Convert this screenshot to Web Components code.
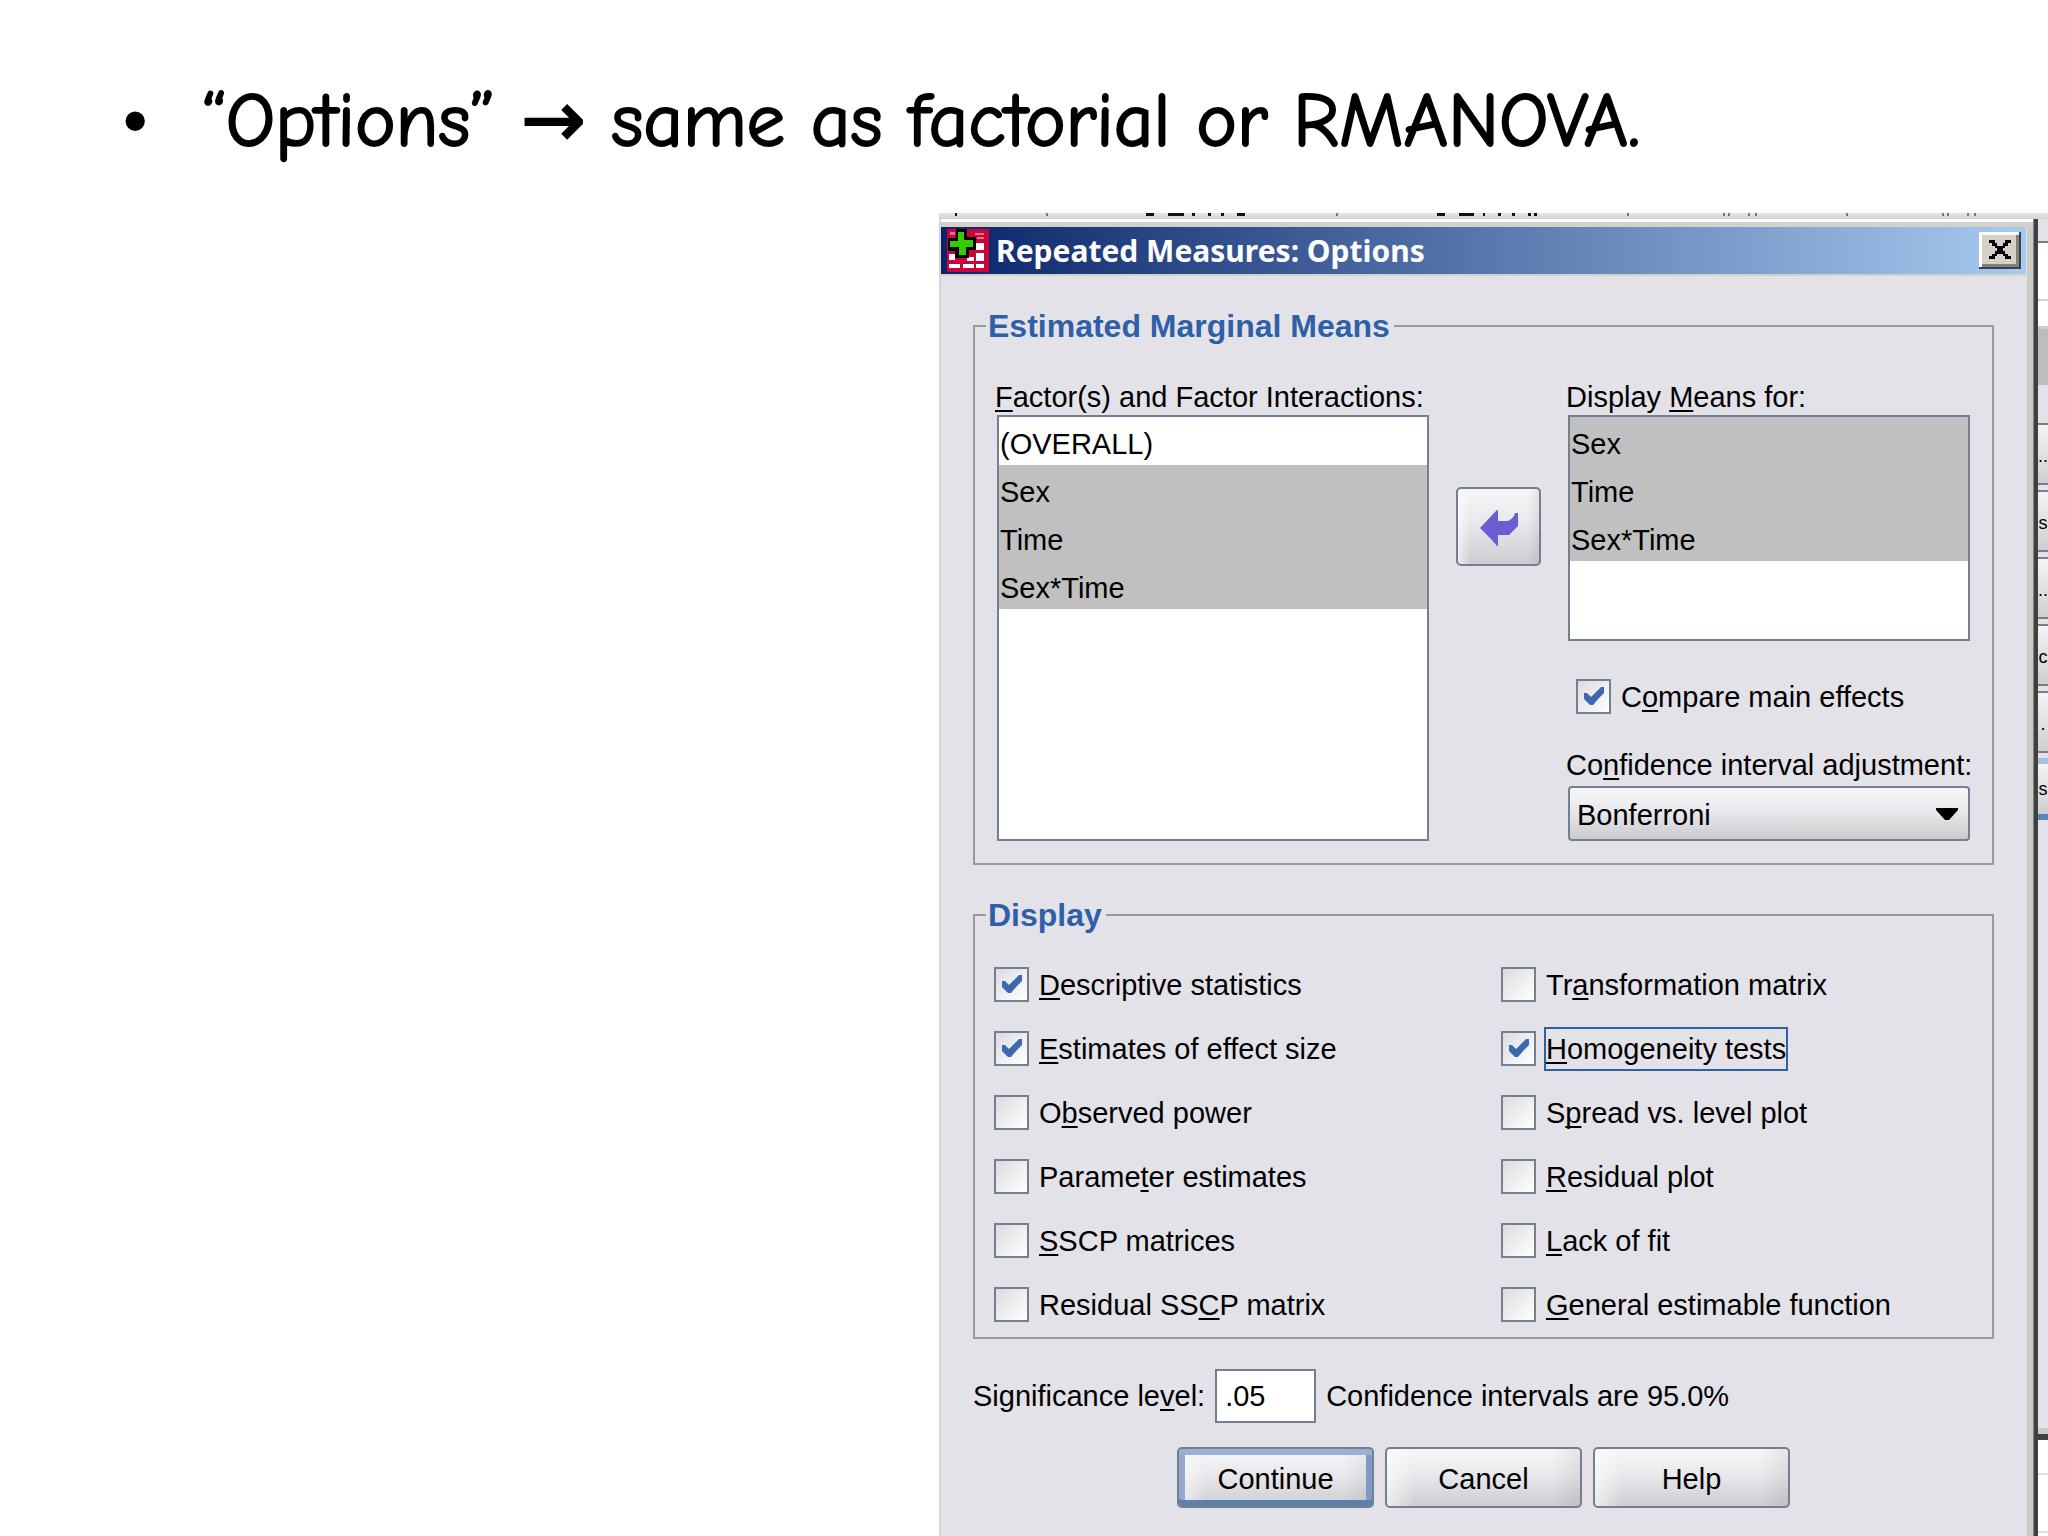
<!DOCTYPE html>
<html lang="en">
<head>
<meta charset="utf-8">
<title>Repeated Measures: Options</title>
<style>
    html, body {
        height: 100%;
        margin: 0;
        overflow: hidden;
        background: #fff;
        color: #000;
    }
    body {
        font-family: "Liberation Sans", Arial, sans-serif;
    }
</style>
</head>
<body>
<slide-page>
    <slide-bullet slot="title">“Options” <span class="arrow">→</span> same as factorial or RMANOVA.</slide-bullet>
    <options-dialog></options-dialog>
</slide-page>

<script>
/**
 * SlidePage - slide with a heading line and a screenshot area on the right
 */
class SlidePage extends HTMLElement {
    constructor() {
        super();
        this.attachShadow({ mode: 'open' }).innerHTML = `
            <style>
                :host {
                    display: grid;
                    grid-template-columns: 939fr 1109fr;
                    grid-template-rows: auto minmax(0, 1fr);
                    height: 100%;
                }
                header {
                    grid-column: 1 / -1;
                    padding: 79px 0 50px 124px;
                }
                main {
                    grid-column: 2;
                    display: flex;
                    flex-direction: column;
                }
                .strip {
                    flex: none;
                    height: 6px;
                    background: linear-gradient(#e6e6e3, #d3d4cf);
                    overflow: hidden;
                }
                .strip svg {
                    display: block;
                }
                .windows {
                    flex: 1;
                    display: flex;
                    min-height: 0;
                }
                .windows slot {
                    display: flex;
                    flex: 1;
                }
            </style>
            <header><slot name="title"></slot></header>
            <main>
                <div class="strip"><svg width="1109" height="3" aria-hidden="true"></svg></div>
                <div class="windows">
                    <slot></slot>
                    <window-behind></window-behind>
                </div>
            </main>
        `;
        this.drawTicks();
    }

    // Bottom edges of the text line that the dialog covers
    drawTicks() {
        const dark = [[16, 2], [207, 8], [229, 16], [253, 3], [269, 3], [282, 3], [298, 8],
            [498, 8], [520, 15], [544, 2], [559, 3], [573, 3], [589, 3], [595, 3]];
        const light = [107, 397, 688, 784, 789, 809, 816, 907, 1003, 1008, 1028, 1035];
        this.shadowRoot.querySelector('svg').innerHTML =
            dark.map(([x, w]) => `<rect x="${x}" width="${w}" height="3" fill="#111"/>`).join('') +
            light.map(x => `<rect x="${x}" width="2" height="3" fill="#777"/>`).join('');
    }
}

/**
 * SlideBullet - one bulleted line
 */
class SlideBullet extends HTMLElement {
    constructor() {
        super();
        this.attachShadow({ mode: 'open' }).innerHTML = `
            <style>
                :host {
                    display: grid;
                    grid-template-columns: 78px 1fr;
                    font-family: "Comic Sans MS", "Comic Neue", "Liberation Sans", cursive;
                    font-size: 77px;
                    line-height: 84px;
                    white-space: nowrap;
                    -webkit-text-stroke: 2px #000;
                }
                .dot {
                    font-family: "Liberation Sans", sans-serif;
                    font-size: 64px;
                }
                ::slotted(.arrow) {
                    font-family: "DejaVu Sans", sans-serif;
                    line-height: 1;
                }
            </style>
            <span class="dot">•</span>
            <span><slot></slot></span>
        `;
    }
}

/**
 * WindowBehind - visible edge of the window under the dialog
 */
class WindowBehind extends HTMLElement {
    constructor() {
        super();
        this.attachShadow({ mode: 'open' }).innerHTML = `
            <style>
                :host {
                    flex: 0 0 10px;
                    display: flex;
                    flex-direction: column;
                    overflow: hidden;
                    background: #fff;
                    font-size: 18px;
                }
                div {
                    flex: none;
                }
                .top {
                    height: 22px;
                    background: #e3e2e8;
                    border-bottom: 2px solid #71818f;
                }
                .field {
                    height: 56px;
                    border-bottom: 2px solid #d0d0d0;
                }
                .gap {
                    height: 25px;
                    border-bottom: 3px solid #d0d0c8;
                }
                .bar {
                    height: 56px;
                    background: #bdbdbd;
                }
                .panel {
                    box-sizing: border-box;
                    height: 1055px;
                    padding-top: 38px;
                    background: #e3e2e8;
                    border-bottom: 6px solid #404040;
                    box-shadow: inset 0 -6px #cbccc5;
                    display: flex;
                    flex-direction: column;
                    gap: 5px;
                }
                .side {
                    box-sizing: border-box;
                    height: 62px;
                    border: solid #71818f;
                    border-width: 2px 0;
                    line-height: 62px;
                    background: linear-gradient(#f4f4f4, #cfcfd1);
                    display: flex;
                    justify-content: center;
                }
                .side:last-child {
                    border-top: 6px solid #a4c0e4;
                    border-bottom: 6px solid #5a84bb;
                    line-height: 50px;
                }
                .rule {
                    height: 33px;
                    border-bottom: 2px solid #e0e0e0;
                }
                .rule + .rule {
                    height: 56px;
                }
            </style>
            <div class="top"></div>
            <div class="field"></div>
            <div class="gap"></div>
            <div class="bar"></div>
            <div class="panel">
                <div class="side">..</div>
                <div class="side">s</div>
                <div class="side">..</div>
                <div class="side">c</div>
                <div class="side">.</div>
                <div class="side">s</div>
            </div>
            <div class="rule"></div>
            <div class="rule"></div>
        `;
    }
}

/**
 * GroupBox - titled frame
 */
class GroupBox extends HTMLElement {
    constructor() {
        super();
        this.attachShadow({ mode: 'open' }).innerHTML = `
            <style>
                :host {
                    display: block;
                }
                fieldset {
                    margin: 0;
                    padding: 0;
                    min-width: 0;
                    border: 2px solid #98989f;
                }
                legend {
                    margin-left: 11px;
                    padding: 0 4px 0 2px;
                    font-size: 32px;
                    font-weight: bold;
                    line-height: 36px;
                    color: #2f60a7;
                }
            </style>
            <fieldset>
                <legend>${this.getAttribute('caption')}</legend>
                <slot></slot>
            </fieldset>
        `;
    }
}

/**
 * CheckItem - check box with its label
 */
class CheckItem extends HTMLElement {
    constructor() {
        super();
        this.attachShadow({ mode: 'open' }).innerHTML = `
            <style>
                :host {
                    display: block;
                }
                label {
                    display: flex;
                    gap: 10px;
                    white-space: nowrap;
                }
                .box {
                    flex: none;
                    display: grid;
                    width: 35px;
                    height: 35px;
                }
                .box > * {
                    grid-area: 1 / 1;
                }
                input {
                    appearance: none;
                    box-sizing: border-box;
                    width: 35px;
                    height: 35px;
                    margin: 0;
                    border: 2px solid #71818f;
                    background: linear-gradient(135deg, #dcdce0, #fff);
                }
                svg {
                    visibility: hidden;
                    pointer-events: none;
                }
                input:checked + svg {
                    visibility: visible;
                }
                .text {
                    margin: -4px -2px;
                    padding: 2px 0;
                    border: 2px solid transparent;
                }
                :host([focused]) .text {
                    border-color: #2f60a7;
                }
                ::slotted(u) {
                    text-decoration-thickness: 2px;
                    text-underline-offset: 3px;
                    text-decoration-skip-ink: none;
                }
            </style>
            <label>
                <span class="box">
                    <input type="checkbox">
                    <svg width="35" height="35" viewBox="0 0 35 35" aria-hidden="true">
                        <path d="M8 14h3l4 4 7-7 3-3h3v6l-5 5-6 7h-3l-6-6z" fill="#3c68ad"/>
                    </svg>
                </span>
                <span class="text"><slot></slot></span>
            </label>
        `;
        this.shadowRoot.querySelector('input').checked = this.hasAttribute('checked');
    }
}

/**
 * ListPanel - labelled list with multiple selection
 */
class ListPanel extends HTMLElement {
    constructor() {
        super();
        const items = this.getAttribute('items').split(',');
        const picked = (this.getAttribute('picked') || '').split(',');
        this.attachShadow({ mode: 'open' }).innerHTML = `
            <style>
                :host {
                    display: flex;
                    flex-direction: column;
                }
                label {
                    margin-left: -2px;
                    white-space: nowrap;
                }
                select {
                    flex: 1;
                    box-sizing: border-box;
                    width: 100%;
                    min-height: 226px;
                    margin: 0;
                    padding: 0;
                    border: 2px solid #71818f;
                    border-radius: 0;
                    outline: none;
                    background: #fff;
                    color: #000;
                    font: inherit;
                    overflow: hidden;
                }
                option {
                    box-sizing: border-box;
                    height: 48px;
                    padding: 11px 1px 3px;
                    color: #000;
                }
                option:checked {
                    background: #c0c0c0 linear-gradient(#c0c0c0, #c0c0c0);
                    color: #000;
                }
                ::slotted(u) {
                    text-decoration-thickness: 2px;
                    text-underline-offset: 3px;
                    text-decoration-skip-ink: none;
                }
            </style>
            <label for="list"><slot></slot></label>
            <select id="list" multiple size="4">
                ${items.map(t => `<option ${picked.includes(t) ? 'selected' : ''}>${t}</option>`).join('')}
            </select>
        `;
    }
}

/**
 * DropDown - labelled combo box
 */
class DropDown extends HTMLElement {
    constructor() {
        super();
        this.attachShadow({ mode: 'open' }).innerHTML = `
            <style>
                :host {
                    display: flex;
                    flex-direction: column;
                    gap: 3px;
                }
                label {
                    margin-left: -2px;
                    white-space: nowrap;
                }
                .field {
                    display: grid;
                    align-items: center;
                }
                .field > * {
                    grid-area: 1 / 1;
                }
                select {
                    appearance: none;
                    box-sizing: border-box;
                    width: 100%;
                    height: 55px;
                    margin: 0;
                    padding: 2px 7px 0;
                    border: 2px solid #71818f;
                    border-radius: 4px;
                    background: linear-gradient(#f7f7f8, #e9e8ec 45%, #cbcacd);
                    color: #000;
                    font: inherit;
                }
                svg {
                    justify-self: end;
                    margin-right: 12px;
                    pointer-events: none;
                }
                ::slotted(u) {
                    text-decoration-thickness: 2px;
                    text-underline-offset: 3px;
                    text-decoration-skip-ink: none;
                }
            </style>
            <label for="combo"><slot></slot></label>
            <div class="field">
                <select id="combo"><option>${this.getAttribute('value')}</option></select>
                <svg width="22" height="12" viewBox="0 0 22 12" aria-hidden="true">
                    <path d="M0 0h22v2L13 12H9L0 2z"/>
                </svg>
            </div>
        `;
    }
}

/**
 * PushButton - dialog button, "primary" draws the default ring
 */
class PushButton extends HTMLElement {
    constructor() {
        super();
        this.attachShadow({ mode: 'open' }).innerHTML = `
            <style>
                :host {
                    display: block;
                    width: 197px;
                    height: 61px;
                }
                button {
                    box-sizing: border-box;
                    display: flex;
                    align-items: center;
                    justify-content: center;
                    width: 100%;
                    height: 100%;
                    margin: 0;
                    padding: 2px 0 0;
                    border: 2px solid #71818f;
                    border-radius: 5px;
                    background:
                        linear-gradient(90deg, #fff9, #fff0 15%, #0000 85%, #0001),
                        linear-gradient(#f6f6f7, #e9e8ec 45%, #cdccd0);
                    color: #000;
                    font: inherit;
                }
                :host([primary]) button {
                    box-shadow:
                        inset 0 -6px #5a80b0,
                        inset 0 6px #9dafd5,
                        inset 6px 0 #96a8cc,
                        inset -6px 0 #8199c4;
                }
            </style>
            <button type="button"><slot></slot></button>
        `;
        const label = this.getAttribute('label');
        if (label) this.shadowRoot.querySelector('button').setAttribute('aria-label', label);
    }
}

/**
 * TitleBar - window caption with icon and close button
 */
class TitleBar extends HTMLElement {
    constructor() {
        super();
        this.attachShadow({ mode: 'open' }).innerHTML = `
            <style>
                :host {
                    display: flex;
                    align-items: center;
                    height: 47px;
                    padding: 0 5px 0 6px;
                    background: linear-gradient(90deg, #0a246a, #a6caf0);
                    color: #fff;
                    font: bold 30px/36px "Noto Sans", "DejaVu Sans", sans-serif;
                    white-space: nowrap;
                }
                h1 {
                    flex: 1;
                    margin: 0 0 0 7px;
                    font: inherit;
                }
                button {
                    box-sizing: border-box;
                    display: grid;
                    place-items: center;
                    width: 42px;
                    height: 37px;
                    padding: 0;
                    border: 0;
                    background: #d4d0c8;
                    box-shadow:
                        inset -2px -2px #404040,
                        inset 3px 3px #fff,
                        inset -5px -5px #808080;
                }
            </style>
            <svg width="42" height="43" viewBox="0 0 42 43" aria-hidden="true">
                <path d="M0 0h42v43H0z" fill="#c8063c"/>
                <path d="M3 3h5v3H3zM28 4h9v2h-9zM30 8h7v2h-7z" fill="#e0708c"/>
                <path d="M29 14h8v7h-8zM2 25h6v6H2zM20 28h7v4h-7zM29 24h8v8h-8zM2 35h11v4H2zM16 35h11v4H16zM29 35h8v4h-8z" fill="#fff"/>
                <path d="M9 0h11v8h9v13h-7v8H8v-7H1V9h8z" fill="#000"/>
                <path d="M11 3h6v8h9v7h-7v8h-7v-8H3v-6h8z" fill="#3c0"/>
            </svg>
            <h1><slot></slot></h1>
            <button type="button" aria-label="Close">
                <svg width="42" height="37" viewBox="0 0 42 37" aria-hidden="true">
                    <path d="M10 8h6v3h2v3h6v-3h2V8h6v3h-3v3h-3v2h-2v3h2v3h3v2h3v3h-6v-3h-2v-2h-6v2h-2v3h-6v-3h3v-2h3v-3h2v-3h-2v-2h-3v-3h-3z"/>
                </svg>
            </button>
        `;
    }
}

/**
 * OptionsDialog - the whole dialog window
 */
class OptionsDialog extends HTMLElement {
    constructor() {
        super();
        this.attachShadow({ mode: 'open' }).innerHTML = `
            <style>
                :host {
                    flex: 1;
                    min-width: 0;
                    display: flex;
                    flex-direction: column;
                    background: #e3e2e8;
                    border-left: 2px solid #d6d5d3;
                    border-right: 4px solid #404040;
                    box-shadow: inset -1px 0 #808080, inset -7px 0 #cbccc5;
                    padding-right: 8px;
                    font-size: 29px;
                    line-height: 36px;
                }
                .frame {
                    flex: none;
                    height: 5px;
                    margin-right: -7px;
                    border-top: 3px solid #fff;
                    background: #d6d1c8;
                }
                title-bar {
                    flex: none;
                    border-bottom: 2px solid #d6d1c8;
                }
                form {
                    flex: none;
                    display: flex;
                    flex-direction: column;
                    padding: 32px;
                }
                .means {
                    display: grid;
                    grid-template-columns: minmax(0, 432fr) 85px minmax(0, 402fr);
                    gap: 27px;
                    padding: 35px 22px 22px;
                }
                .means push-button {
                    width: auto;
                    height: 79px;
                    margin-top: 108px;
                }
                .right {
                    display: flex;
                    flex-direction: column;
                    gap: 32px;
                }
                .right check-item {
                    margin: 6px 0 0 8px;
                }
                .display {
                    display: grid;
                    grid-template-columns: 1fr 1fr;
                    gap: 28px 16px;
                    padding: 34px 0 14px 19px;
                }
                group-box + group-box {
                    margin-top: 32px;
                }
                .level {
                    display: flex;
                    align-items: center;
                    gap: 10px;
                    margin-top: 30px;
                    white-space: nowrap;
                }
                .level input {
                    box-sizing: border-box;
                    width: 101px;
                    height: 54px;
                    padding: 0 8px;
                    border: 2px solid #71818f;
                    background: #fff;
                    font: inherit;
                }
                .buttons {
                    display: flex;
                    justify-content: center;
                    gap: 11px;
                    margin-top: 24px;
                }
                u {
                    text-decoration-thickness: 2px;
                    text-underline-offset: 3px;
                    text-decoration-skip-ink: none;
                }
            </style>
            <div class="frame"></div>
            <title-bar>Repeated Measures: Options</title-bar>
            <form>
                <group-box caption="Estimated Marginal Means">
                    <div class="means">
                        <list-panel items="(OVERALL),Sex,Time,Sex*Time" picked="Sex,Time,Sex*Time"><u>F</u>actor(s) and Factor Interactions:</list-panel>
                        <push-button label="Move left">
                            <svg width="38" height="36" viewBox="0 0 38 36" aria-hidden="true">
                                <path d="M0 18L15 2l2-2h1v11h10c4-2 6-4 7-8h3v13l-5 5-4 4H18v11h-1L11 29z" fill="#6a5fd0"/>
                            </svg>
                        </push-button>
                        <div class="right">
                            <list-panel items="Sex,Time,Sex*Time" picked="Sex,Time,Sex*Time">Display <u>M</u>eans for:</list-panel>
                            <check-item checked>C<u>o</u>mpare main effects</check-item>
                            <drop-down value="Bonferroni">Co<u>n</u>fidence interval adjustment:</drop-down>
                        </div>
                    </div>
                </group-box>
                <group-box caption="Display">
                    <div class="display">
                        <check-item checked><u>D</u>escriptive statistics</check-item>
                        <check-item>Tr<u>a</u>nsformation matrix</check-item>
                        <check-item checked><u>E</u>stimates of effect size</check-item>
                        <check-item checked focused><u>H</u>omogeneity tests</check-item>
                        <check-item>O<u>b</u>served power</check-item>
                        <check-item>S<u>p</u>read vs. level plot</check-item>
                        <check-item>Parame<u>t</u>er estimates</check-item>
                        <check-item><u>R</u>esidual plot</check-item>
                        <check-item><u>S</u>SCP matrices</check-item>
                        <check-item><u>L</u>ack of fit</check-item>
                        <check-item>Residual SS<u>C</u>P matrix</check-item>
                        <check-item><u>G</u>eneral estimable function</check-item>
                    </div>
                </group-box>
                <div class="level">
                    <label for="level">Significance le<u>v</u>el:</label>
                    <input id="level" type="text" value=".05">
                    <span>Confidence intervals are 95.0%</span>
                </div>
                <div class="buttons">
                    <push-button primary>Continue</push-button>
                    <push-button>Cancel</push-button>
                    <push-button>Help</push-button>
                </div>
            </form>
        `;
    }
}

customElements.define('group-box', GroupBox);
customElements.define('check-item', CheckItem);
customElements.define('list-panel', ListPanel);
customElements.define('drop-down', DropDown);
customElements.define('push-button', PushButton);
customElements.define('title-bar', TitleBar);
customElements.define('window-behind', WindowBehind);
customElements.define('options-dialog', OptionsDialog);
customElements.define('slide-bullet', SlideBullet);
customElements.define('slide-page', SlidePage);
</script>
</body>
</html>
